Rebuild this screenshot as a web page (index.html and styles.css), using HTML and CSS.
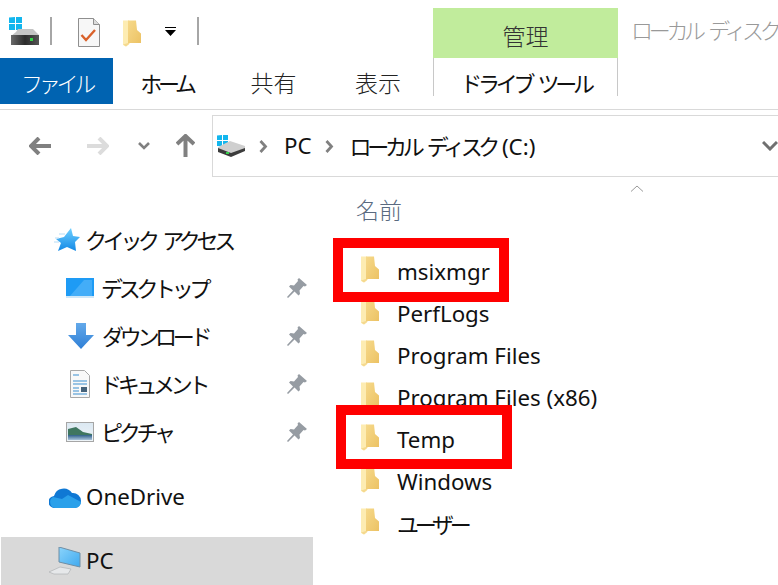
FILE: index.html
```html
<!DOCTYPE html>
<html lang="ja">
<head>
<meta charset="utf-8">
<title>ローカル ディスク (C:)</title>
<link rel="stylesheet" href="styles.css">
</head>
<body>
<svg class="defs" width="0" height="0" aria-hidden="true">
  <defs>
    <linearGradient id="fg" x1="0" y1="0" x2="1" y2="1"><stop offset="0" stop-color="#f6d98a"/><stop offset="1" stop-color="#ecc264"/></linearGradient>
    <linearGradient id="blue" x1="0" y1="0" x2="0" y2="1"><stop offset="0" stop-color="#63a9ea"/><stop offset="1" stop-color="#2f7fd6"/></linearGradient>
    <linearGradient id="star" x1="0" y1="0" x2="0" y2="1"><stop offset="0" stop-color="#6fd0ff"/><stop offset="1" stop-color="#1389e6"/></linearGradient>
    <linearGradient id="sky" x1="0" y1="0" x2="0" y2="1"><stop offset="0" stop-color="#dbe8f2"/><stop offset="1" stop-color="#eef4f8"/></linearGradient>
    <linearGradient id="water" x1="0" y1="0" x2="0" y2="1"><stop offset="0" stop-color="#2f5f8a"/><stop offset="1" stop-color="#a9c4da"/></linearGradient>
    <linearGradient id="hd" x1="0" y1="0" x2="1" y2="0"><stop offset="0" stop-color="#6a6a6a"/><stop offset=".5" stop-color="#2b2b2b"/><stop offset="1" stop-color="#555"/></linearGradient>
    <linearGradient id="scr" x1="0" y1="0" x2="1" y2="1"><stop offset="0" stop-color="#8bd4fb"/><stop offset="1" stop-color="#3fa9ef"/></linearGradient>
    <symbol id="folder" viewBox="0 0 18 27">
      <path d="M0 .5h6v24l-3 2-3-1.500z" fill="#fdecb2"/>
      <path d="M5 .5h8l1 9.500 4 3.500V23H5z" fill="url(#fg)"/>
      <path d="M0 24.500l3 2 4-3.500H5z" fill="#f5d98f"/>
    </symbol>
    <symbol id="drive" viewBox="0 0 32 28">
      <path d="M1 .5l6-.5v6H1zM8 0l6-.5V6H8zM1 7h6v6H1zM8 7h6v6H8z" fill="#12b6ee"/>
      <path d="M8 15l2-3h15l6 6v1H3z" fill="#c4c4c4"/>
      <rect x="3" y="18" width="28" height="10" fill="url(#hd)"/>
      <rect x="22" y="21" width="3" height="3" fill="#35d24a"/>
    </symbol>
    <symbol id="adrive" viewBox="0 0 29 22">
      <path d="M0 .5L5 0v5H0zM6 0l5-.5V5H6zM0 6h5v5H0zM6 6h5v5H6z" fill="#12b6ee"/>
      <path d="M13 6l15 5v4l-14 6L1 16v-4z" fill="#cfcfcf"/>
      <path d="M1 13l13 5 14-5v3l-14 6L1 17z" fill="#3c3c3c"/>
      <rect x="9" y="17" width="3" height="2" fill="#35d24a"/>
    </symbol>
    <symbol id="pin" viewBox="0 0 20 20">
      <path d="M12 0l8 7-2 1.500-1.500-.5-4 4.500.5 3.500-1.500 1.500-4-4L1 20 0 19l6-6.500-4-4L3.500 7l3.500.5 4-4.500-.5-1.500z" fill="#969ca3"/>
    </symbol>
  </defs>
</svg>

<header class="qat">
  <svg class="ic-drive"><use href="#drive"/></svg>
  <span class="sep sep-a"></span>
  <svg class="ic-doc" viewBox="0 0 22 29">
    <path d="M.5.500h15l6 6v22H.5z" fill="#f7f7f7" stroke="#8f8f8f"/>
    <path d="M15.500.500v6h6" fill="#dcdcdc" stroke="#8f8f8f"/>
    <path d="M3.500 17l4.500 5 9-10" fill="none" stroke="#d9612a" stroke-width="2.400"/>
  </svg>
  <svg class="ic-qfolder"><use href="#folder"/></svg>
  <svg class="ic-drop" viewBox="0 0 11 9"><path d="M0 0h11v1H0zM0 3h11L5.500 9z" fill="#000"/></svg>
  <span class="sep sep-b"></span>
  <div class="ctx-head kanji">管理</div>
  <div class="win-title ja">ローカル ディスク</div>
</header>

<nav class="tabs">
  <div class="tab tab-file ja">ファイル</div>
  <div class="tab tab-home ja">ホーム</div>
  <div class="tab tab-share kanji">共有</div>
  <div class="tab tab-view kanji">表示</div>
  <div class="tab tab-tool ja">ドライブ ツール</div>
</nav>

<section class="addr-row">
  <div class="nav-btns">
    <svg class="nb nb-back" viewBox="0 0 22 18"><path d="M10 1L2 9l8 8M2 9h20" fill="none" stroke="#808080" stroke-width="4"/></svg>
    <svg class="nb nb-fwd" viewBox="0 0 22 18"><path d="M12 1l8 8-8 8M20 9H0" fill="none" stroke="#dcdcdc" stroke-width="4"/></svg>
    <svg class="nb nb-down" viewBox="0 0 12 8"><path d="M1 1l5 5 5-5" fill="none" stroke="#808080" stroke-width="2.600"/></svg>
    <svg class="nb nb-up" viewBox="0 0 19 23"><path d="M1 10l8.500-8 8.500 8M9.500 2v21" fill="none" stroke="#808080" stroke-width="4"/></svg>
  </div>
  <div class="addr">
    <svg class="ic-adrive"><use href="#adrive"/></svg>
    <svg class="chev" viewBox="0 0 9 13"><path d="M1.500 1l5 5.500-5 5.500" fill="none" stroke="#808080" stroke-width="2.800"/></svg>
    <span class="crumb">PC</span>
    <svg class="chev" viewBox="0 0 9 13"><path d="M1.500 1l5 5.500-5 5.500" fill="none" stroke="#808080" stroke-width="2.800"/></svg>
    <span class="crumb"><span class="ja">ローカル ディスク</span> (C:)</span>
    <svg class="addr-drop" viewBox="0 0 16 10"><path d="M1 1l7 7 7-7" fill="none" stroke="#707070" stroke-width="3"/></svg>
  </div>
</section>

<main class="body">
  <aside class="side">
    <div class="row lvl1">
      <svg class="si si-star" viewBox="0 0 26 24"><path d="M17 0l2 8 7 1-5 5 1 9-9-4-9 4 3-8-5-4 8-2z" fill="url(#star)"/><path d="M0 14h5M1 10h4M5 6h6" stroke="#b7dcf5"/></svg>
      <span class="ja">クイック アクセス</span>
    </div>
    <div class="row lvl2">
      <svg class="si si-desk" viewBox="0 0 28 20"><rect width="28" height="20" fill="#1e9bf5"/><path d="M4 18L18 2h8v16z" fill="#43adf8"/><rect y="18" width="28" height="2" fill="#cfe7f8"/></svg>
      <span class="lbl ja">デスクトップ</span>
      <svg class="pin"><use href="#pin"/></svg>
    </div>
    <div class="row lvl2">
      <svg class="si si-dl" viewBox="0 0 26 26"><path d="M8 0h10v12h8L13 26 0 12h8z" fill="url(#blue)"/></svg>
      <span class="lbl ja">ダウンロード</span>
      <svg class="pin"><use href="#pin"/></svg>
    </div>
    <div class="row lvl2">
      <svg class="si si-text" viewBox="0 0 20 28"><path d="M.5.500h14l5 5v22H.5z" fill="#f8f8f8" stroke="#a8a8a8"/><path d="M3 5h6M3 11h14M3 14h14M3 18h6M3 21h6M3 24h14" stroke="#3b8fd0"/><rect x="11" y="17" width="6" height="5" fill="#45627a"/></svg>
      <span class="lbl ja">ドキュメント</span>
      <svg class="pin"><use href="#pin"/></svg>
    </div>
    <div class="row lvl2">
      <svg class="si si-pic" viewBox="0 0 28 20"><rect x=".5" y=".5" width="27" height="19" fill="url(#sky)" stroke="#a6a6a6"/><path d="M2 7l8-2 7 5 9 2v2H2z" fill="#3f7660"/><rect x="2" y="13" width="24" height="5" fill="url(#water)"/></svg>
      <span class="lbl ja">ピクチャ</span>
      <svg class="pin"><use href="#pin"/></svg>
    </div>
    <div class="row lvl0 row-od">
      <svg class="si si-od" viewBox="0 0 32 21"><path d="M6 21a6 6 0 0 1-1-12 10 10 0 0 1 18-3 8 8 0 0 1 9 8 7 7 0 0 1-6 7z" fill="#0f78d4"/><path d="M6 21a6 6 0 0 1-2-11l9 2 6-4 13 7a6 6 0 0 1-6 6z" fill="#2aa0ea"/></svg>
      <span>OneDrive</span>
    </div>
    <div class="row lvl0 row-pc">
      <svg class="si si-pc" viewBox="0 0 32 28"><path d="M10 0l21 6v14l-21-5z" fill="url(#scr)" stroke="#6f8ea5"/><path d="M0 25l11-5 11 2-3 5H5z" fill="#e6e8ea" stroke="#a9adb0" stroke-width=".6"/></svg>
      <span>PC</span>
    </div>
  </aside>

  <section class="files">
    <svg class="sort" viewBox="0 0 14 7"><path d="M1 6.500l6-5.500 6 5.500" fill="none" stroke="#9a9a9a"/></svg>
    <div class="col-head kanji">名前</div>
    <ul class="list">
      <li><svg class="ff"><use href="#folder"/></svg>msixmgr</li>
      <li><svg class="ff"><use href="#folder"/></svg>PerfLogs</li>
      <li><svg class="ff"><use href="#folder"/></svg>Program Files</li>
      <li><svg class="ff"><use href="#folder"/></svg>Program Files (x86)</li>
      <li><svg class="ff"><use href="#folder"/></svg>Temp</li>
      <li><svg class="ff"><use href="#folder"/></svg>Windows</li>
      <li><svg class="ff"><use href="#folder"/></svg><span class="ja">ユーザー</span></li>
    </ul>
  </section>
</main>

<div class="mark mark-a"></div>
<div class="mark mark-b"></div>
</body>
</html>
```

FILE: styles.css
```css
* { box-sizing: border-box; }
html, body { margin: 0; padding: 0; }
body {
  position: relative;
  width: 778px;
  height: 585px;
  overflow: hidden;
  background: #fff;
  color: #111;
  font-family: "Noto Sans", "Noto Sans CJK JP", sans-serif;
  font-size: 22.3px;
  line-height: 30px;
}
svg { display: block; flex: none; }
.defs { position: absolute; }
.ja { font-size: 22px; letter-spacing: -4.3px; word-spacing: 5px; color: #111; }
.kanji { font-size: 23px; font-weight: 300; }

.qat { display: flex; align-items: flex-start; height: 58px; white-space: nowrap; }
.ic-drive { width: 32px; height: 28px; margin: 17px 0 0 8px; }
.sep { width: 2px; height: 28px; margin-top: 17px; background: #a6a6a6; }
.sep-a { margin-left: 10px; }
.ic-doc { width: 22px; height: 29px; margin: 18px 0 0 26px; }
.ic-qfolder { width: 18px; height: 27px; margin: 20px 0 0 23px; }
.ic-drop { width: 11px; height: 9px; margin: 27px 0 0 24px; }
.sep-b { margin-left: 21px; }
.ctx-head {
  flex: none; width: 185px; height: 50px; margin: 8px 0 0 234px;
  background: #c1ec9c; text-align: center; line-height: 56px; color: #333;
}
.win-title { flex: none; margin: 15px 0 0 13px; color: #999; font-weight: 300; }

.tabs { display: flex; height: 46px; white-space: nowrap; color: #222; }
.tab { flex: none; line-height: 50px; text-align: center; }
.tab-file { width: 113px; background: #0063b1; color: #fff; font-weight: 300; }
.tab-home { width: 107px; }
.tab-share { width: 107px; }
.tab-view { width: 102px; }
.tab-tool {
  width: 185px; margin-left: 4px; height: 38px;
  border: solid #c8c8c8; border-width: 0 1px;
}

.addr-row { display: flex; margin-top: 5px; height: 68px; border-top: 1px solid #d9d9d9; padding-top: 5px; }
.nav-btns { display: flex; align-items: center; width: 212px; height: 61px; }
.nb-back { width: 22px; height: 18px; margin-left: 29px; }
.nb-fwd { width: 22px; height: 18px; margin-left: 36px; }
.nb-down { width: 12px; height: 8px; margin-left: 29px; }
.nb-up { width: 19px; height: 23px; margin-left: 26px; }
.addr {
  flex: 1; display: flex; align-items: center; height: 62px;
  border: solid #d9d9d9; border-width: 1px 0 1px 1px; white-space: nowrap;
}
.ic-adrive { width: 29px; height: 22px; margin-left: 4px; }
.chev { width: 9px; height: 13px; margin-left: 13px; }
.crumb { margin-left: 16px; }
.addr-drop { width: 16px; height: 10px; margin-left: auto; }

.body { display: grid; grid-template-columns: 313px 1fr; height: 408px; }
.side { padding-top: 39px; }
.row { display: flex; align-items: center; height: 48px; white-space: nowrap; }
.lvl1 { padding-left: 54px; }
.lvl2 { padding-left: 66px; }
.lvl0 { padding-left: 49px; }
.si-star { width: 26px; height: 24px; margin-right: 5px; }
.si-desk, .si-pic { width: 28px; height: 20px; margin-right: 7px; }
.si-dl { width: 26px; height: 26px; margin: 0 8px 0 2px; }
.si-text { width: 20px; height: 28px; margin: 0 10px 0 4px; }
.lbl { flex: 1; }
.pin { width: 20px; height: 20px; margin-right: 6px; }
.row-od { margin-top: 17px; }
.si-od { width: 32px; height: 21px; margin-right: 5px; }
.row-pc { margin: 16px 0 0 1px; height: 49px; padding: 0 0 2px 48px; background: #d9d9d9; }
.si-pc { width: 32px; height: 28px; margin-right: 5px; }

.files { position: relative; padding: 18px 0 0 43px; }
.sort { position: absolute; left: 317px; top: 8px; width: 14px; height: 7px; }
.col-head { height: 56px; color: #5a6a80; }
.list { margin: 0; padding: 0 0 0 5px; list-style: none; }
.list li { display: flex; align-items: center; height: 42px; white-space: nowrap; }
.ff { width: 18px; height: 27px; margin: -5px 18px 0 0; }

.mark { position: absolute; border: 10px solid #f00; }
.mark-a { left: 333px; top: 238px; width: 176px; height: 64px; }
.mark-b { left: 336px; top: 405px; width: 176px; height: 64px; }
```
